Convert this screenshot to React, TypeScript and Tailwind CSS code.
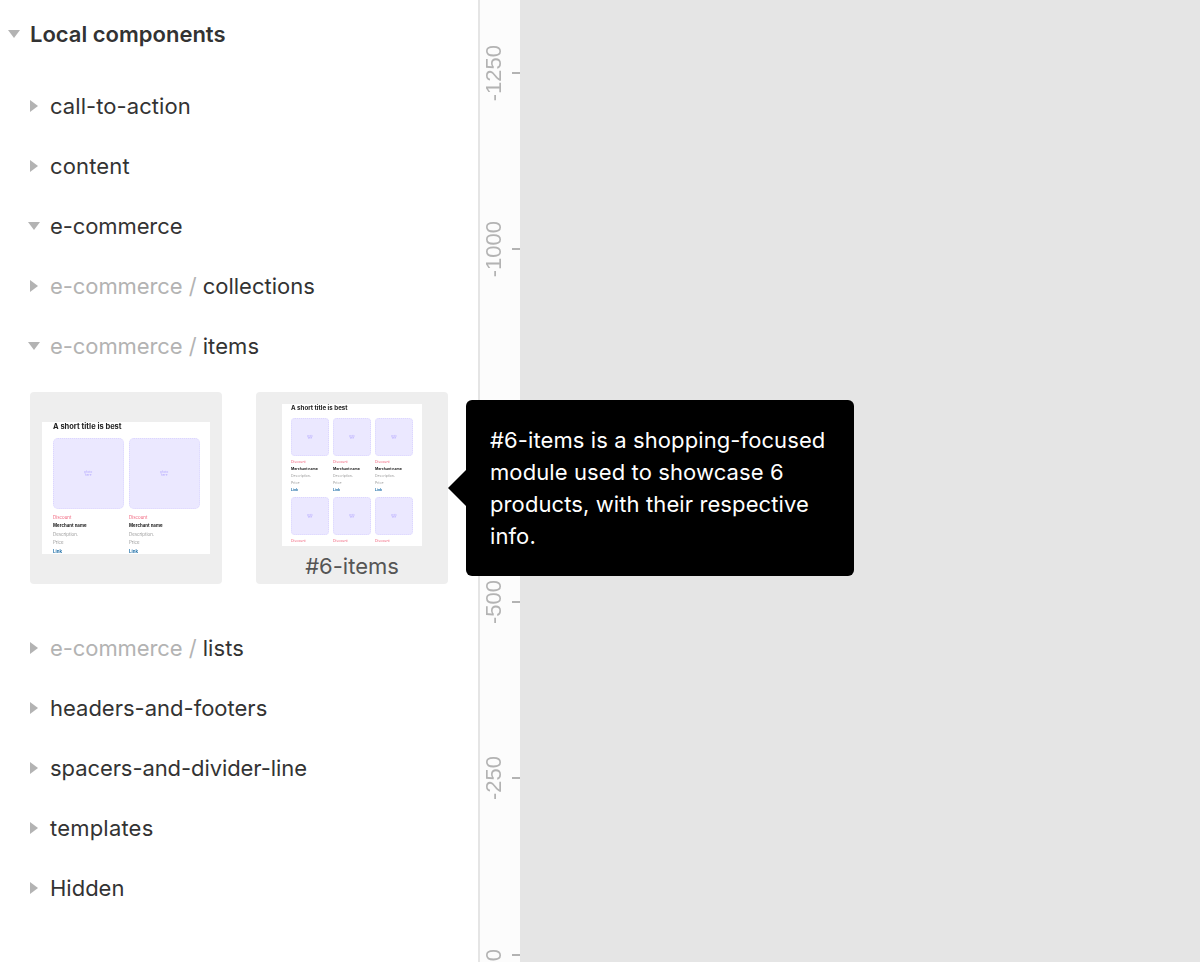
import React from 'react';

type Row = { label: string; prefix?: string; open?: boolean; tracking?: string };

const rowsBefore: Row[] = [
  { label: 'call-to-action', tracking: 'tracking-[0.07px]' },
  { label: 'content', tracking: 'tracking-[0.14px]' },
  { label: 'e-commerce', open: true, tracking: 'tracking-[-0.1px]' },
  { label: 'collections', prefix: 'e-commerce / ' },
  { label: 'items', prefix: 'e-commerce / ', open: true, tracking: 'tracking-[0.1px]' },
];

const rowsAfter: Row[] = [
  { label: 'lists', prefix: 'e-commerce / ', tracking: 'tracking-[0.1px]' },
  { label: 'headers-and-footers' },
  { label: 'spacers-and-divider-line', tracking: 'tracking-[-0.08px]' },
  { label: 'templates', tracking: 'tracking-[0.2px]' },
  { label: 'Hidden' },
];

const ticks = [
  { label: '-1250', top: 'top-[73px]' },
  { label: '-1000', top: 'top-[249px]' },
  { label: '-500', top: 'top-[602px]' },
  { label: '-250', top: 'top-[778px]' },
  { label: '0', top: 'top-[955px]' },
];

const Caret = ({ open }: { open?: boolean }) =>
  open ? (
    <svg width="12" height="8" viewBox="0 0 12 8" className="shrink-0">
      <path d="M0 0H12L6 8Z" fill="#b3b3b3" />
    </svg>
  ) : (
    <svg width="8" height="12" viewBox="0 0 8 12" className="shrink-0">
      <path d="M0 0L8 6L0 12Z" fill="#b3b3b3" />
    </svg>
  );

const SectionRow = ({ row }: { row: Row }) => (
  <div className="flex h-[60px] items-center">
    <div className={row.open ? 'flex w-[50px] justify-end pr-[10px]' : 'flex w-[50px] justify-end pr-3'}>
      <Caret open={row.open} />
    </div>
    <span className={`text-[22px] text-[#333333] ${row.tracking ?? ''}`}>
      {row.prefix && <span className="tracking-[-0.08px] text-[#b3b3b3]">{row.prefix}</span>}
      {row.label}
    </span>
  </div>
);

const LargeItem = () => (
  <div className="flex flex-col">
    <div className="flex h-[71px] w-[70.5px] items-center justify-center rounded-[5px] border border-dotted border-[#dcd6ff] bg-[#ebe8ff]">
      <span className="text-center text-[3px] leading-[3px] text-[#b4a8ff]">
        photo
        <br />
        here
      </span>
    </div>
    <div className="mt-[5px] text-[4.4px] leading-[8.4px]">
      <div className="text-[#f0607a]">Discount</div>
      <div className="font-bold text-[#222222]">Merchant name</div>
      <div className="text-[#999999]">Description.</div>
      <div className="text-[#999999]">Price</div>
      <div className="font-bold text-[#1f6fa8]">Link</div>
    </div>
  </div>
);

const SmallItem = ({ short }: { short?: boolean }) => (
  <div className="flex flex-col">
    <div className="flex h-[38px] w-[38px] items-center justify-center rounded-[4px] border border-dotted border-[#dcd6ff] bg-[#ebe8ff]">
      <span className="text-center text-[2px] leading-[2.5px] text-[#b4a8ff]">
        photo
        <br />
        here
      </span>
    </div>
    <div className="mt-[2.5px] text-[3.5px] leading-[7px]">
      <div className="text-[#f0607a]">Discount</div>
      {!short && (
        <>
          <div className="font-bold text-[#222222]">Merchant name</div>
          <div className="text-[#999999]">Description.</div>
          <div className="text-[#999999]">Price</div>
          <div className="font-bold text-[#1f6fa8]">Link</div>
        </>
      )}
    </div>
  </div>
);

export default function App() {
  return (
    <div className="relative flex h-[962px] w-[1200px] overflow-hidden bg-[#e5e5e5] [font-family:Inter,sans-serif]">
      {/* Components panel */}
      <aside className="h-full w-[480px] shrink-0 border-r-2 border-[#e5e5e5] bg-white pt-1">
        <div className="mb-3 flex h-[60px] items-center">
          <div className="w-[30px] pl-2">
            <Caret open />
          </div>
          <span className="text-[22px] font-semibold text-[#333333]">Local components</span>
        </div>

        {rowsBefore.map(row => (
          <SectionRow key={row.label + row.prefix} row={row} />
        ))}

        {/* Thumbnails */}
        <div className="mt-4 mb-[34px] flex gap-[34px] pl-[30px]">
          <div className="flex h-[192px] w-[192px] items-center justify-center rounded bg-[#eeeeee]">
            <div className="h-[132px] w-[168px] overflow-hidden bg-white pl-[11px] blur-[0.5px]">
              <div className="text-[7.5px] leading-[9px] font-bold text-[#222222]">A short title is best</div>
              <div className="mt-[7px] flex gap-[5.5px]">
                <LargeItem />
                <LargeItem />
              </div>
            </div>
          </div>
          <div className="flex h-[192px] w-[192px] flex-col items-center rounded bg-[#eeeeee] pt-3">
            <div className="h-[142px] w-[140px] overflow-hidden bg-white pl-[9px] blur-[0.5px]">
              <div className="text-[6.2px] leading-[7px] font-bold text-[#222222]">A short title is best</div>
              <div className="mt-[7px] grid grid-cols-[38px_38px_38px] gap-x-[4px] gap-y-[3.5px]">
                <SmallItem />
                <SmallItem />
                <SmallItem />
                <SmallItem short />
                <SmallItem short />
                <SmallItem short />
              </div>
            </div>
            <span className="mt-[5px] text-[22px] leading-[30px] text-[#555555]">#6-items</span>
          </div>
        </div>

        {rowsAfter.map(row => (
          <SectionRow key={row.label + row.prefix} row={row} />
        ))}
      </aside>

      {/* Ruler */}
      <div className="relative h-full w-10 shrink-0 bg-[#fcfcfc]">
        {ticks.map(tick => (
          <div key={tick.label} className={`absolute right-0 flex h-0 items-center ${tick.top}`}>
            <span className="rotate-180 text-[22px] leading-[22px] text-[#b3b3b3] [font-family:'Liberation_Sans',sans-serif] [writing-mode:vertical-rl]">
              {tick.label}
            </span>
            <div className="ml-[7px] h-[2px] w-2 bg-[#b3b3b3]" />
          </div>
        ))}
      </div>

      {/* Tooltip */}
      <div className="absolute top-[400px] left-[466px] h-[176px] w-[388px] rounded-md bg-black px-6 py-6 text-[22px] leading-8 tracking-[0.1px] text-white">
        <svg width="18" height="36" viewBox="0 0 18 36" className="absolute top-[70px] -left-[18px]">
          <path d="M18 0V36L0 18Z" fill="#000000" />
        </svg>
        #6-items is a shopping-focused module used to showcase 6 products, with their respective info.
      </div>
    </div>
  );
}
